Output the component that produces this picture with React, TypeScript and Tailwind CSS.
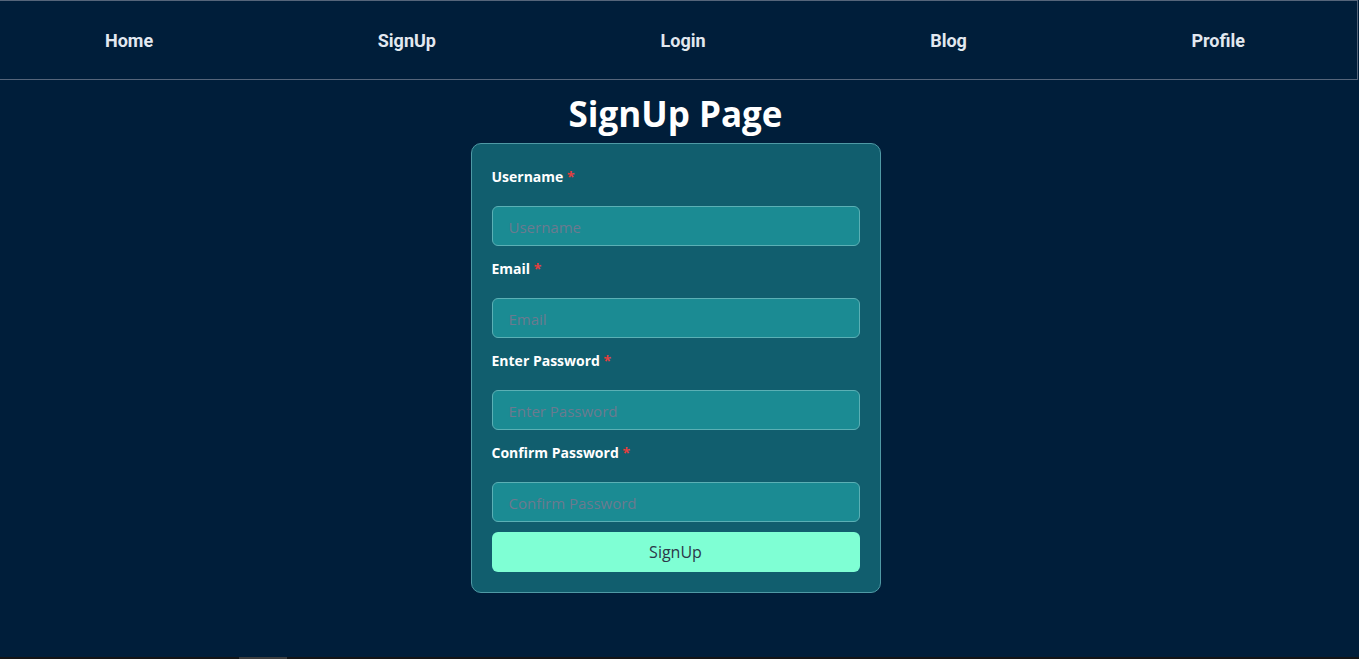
const links = ['Home', 'SignUp', 'Login', 'Blog', 'Profile']

const fields = [
  { label: 'Username', placeholder: 'Username', type: 'text' },
  { label: 'Email', placeholder: 'Email', type: 'email' },
  { label: 'Enter Password', placeholder: 'Enter Password', type: 'password' },
  { label: 'Confirm Password', placeholder: 'Confirm Password', type: 'password' },
]

export default function App() {
  return (
    <div className="w-[1359px] h-[659px] overflow-hidden bg-[#001e3a] flex flex-col font-['Open_Sans',sans-serif]">
      {/* Navbar */}
      <nav className="w-[1358px] h-[80px] shrink-0 border-t border-b border-r border-[#55657a] flex items-center justify-between pl-[105px] pr-[112px]">
        {links.map((l) => (
          <a key={l} href="#" className="font-['Roboto',sans-serif] font-bold text-[18px] text-[#e2e8f0]">
            {l}
          </a>
        ))}
      </nav>

      <main className="w-[1351px] flex-1 flex flex-col items-center">
        <h1 className="mt-[10px] text-[35px] leading-[48px] font-bold text-white">SignUp Page</h1>

        <form
          onSubmit={(e) => e.preventDefault()}
          className="mt-[5px] w-[410px] rounded-[10px] border border-[#4f9aa5] bg-[#115e6e] px-[20px] pt-[22px] pb-[20px] flex flex-col"
        >
          <div className="flex flex-col gap-[12px]">
            {fields.map((f) => (
              <div key={f.label} className="flex flex-col">
                <label className="text-[14px] leading-[22px] font-bold text-white">
                  {f.label} <span className="text-[#e53e3e]">*</span>
                </label>
                <input
                  type={f.type}
                  placeholder={f.placeholder}
                  className="mt-[18px] h-[40px] w-full rounded-[6px] border border-[#5bb0b5] bg-[#1b8b93] px-[16px] pt-[2px] text-[15px] text-white placeholder:text-[#6b7a8f] outline-none"
                />
              </div>
            ))}
          </div>
          <button
            type="submit"
            className="mt-[10px] h-[40px] w-full rounded-[6px] bg-[#7fffd4] text-[16px] text-[#2d3748]"
          >
            SignUp
          </button>
        </form>
      </main>

      {/* scrollbar strip */}
      <div className="h-[2px] shrink-0 bg-[#151515] flex">
        <div className="ml-[239px] w-[48px] bg-[#3c3c3c]" />
      </div>
    </div>
  )
}
